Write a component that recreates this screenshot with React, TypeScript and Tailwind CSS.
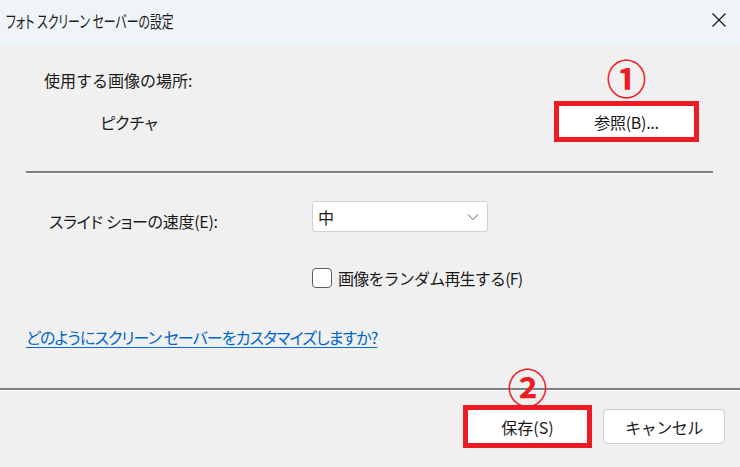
import React from "react";

export default function App() {
  const font = { fontFamily: '"Noto Sans CJK JP", "Noto Sans", sans-serif' };
  return (
    <div
      className="w-[740px] h-[467px] bg-[#f0f0f0] text-[#1a1a1a] flex flex-col overflow-hidden"
      style={font}
    >
      {/* Title bar */}
      <div className="h-[44px] bg-[#eff4f9] flex items-center justify-between pl-[6px] pr-[13px] shrink-0">
        <span className="text-[17px] leading-none mb-[4px] [font-feature-settings:'palt'] scale-x-[0.7] origin-left whitespace-pre">フォト スクリーン セーバーの設定</span>
        <svg width="16" height="16" viewBox="0 0 16 16" className="mb-[4px]">
          <path d="M1.5 1.5 L14.5 14.5 M14.5 1.5 L1.5 14.5" stroke="#1a1a1a" strokeWidth="1.3" />
        </svg>
      </div>

      {/* Section 1 */}
      <div className="pl-[44px] pt-[25px] text-[16px] leading-[22px]">使用する画像の場所:</div>
      <div className="flex items-center mt-[10px] pl-[100px] pr-[41px] justify-between">
        <span className="text-[16px] leading-[22px] tracking-[-1.5px]">ピクチャ</span>
        <div className="relative">
          <span className="absolute left-1/2 -translate-x-1/2 -top-[44px] text-[#ed1c24] text-[40px] leading-none font-bold">
            ①
          </span>
          <button className="w-[145px] h-[41px] bg-white border-[5px] border-[#ed1c24] flex items-center justify-center text-[16px] leading-none tracking-[-0.3px]">
            参照(B)...
          </button>
        </div>
      </div>

      {/* Separator */}
      <div className="mx-[26px] w-[687px] mt-[29px] h-[3px] border-t-2 border-[#808080] border-b border-b-white" />

      {/* Speed row */}
      <div className="flex items-start mt-[27px]">
        <span className="pl-[49px] w-[312px] text-[16px] leading-[22px] pt-[9px] [font-feature-settings:'palt'] tracking-[-0.3px]">スライド ショーの速度(E):</span>
        <div className="w-[176px] h-[31px] bg-white border border-[#d0d0d0] rounded-[3px] flex items-center justify-between pl-[5px] pr-[8px]">
          <span className="text-[16px] leading-none">中</span>
          <svg width="12" height="8" viewBox="0 0 12 8">
            <path d="M1 1.5 L6 6.5 L11 1.5" fill="none" stroke="#5a5a5a" strokeWidth="1" />
          </svg>
        </div>
      </div>

      {/* Checkbox row */}
      <div className="flex items-center mt-[35px] pl-[312px] gap-[6px]">
        <div className="w-[20px] h-[20px] bg-white border border-[#5f5f5f] rounded-[4px]" />
        <span className="text-[16px] leading-[22px] tracking-[-0.8px]">画像をランダム再生する(F)</span>
      </div>

      {/* Link */}
      <div className="pl-[26px] mt-[36px]">
        <a className="text-[16px] leading-[22px] text-[#0066cc] underline underline-offset-[3px] [font-feature-settings:'palt'] tracking-[-0.9px] cursor-pointer">
          どのようにスクリーン セーバーをカスタマイズしますか?
        </a>
      </div>

      {/* Separator full */}
      <div className="w-full mt-[39px] h-[3px] border-t-2 border-[#808080] border-b border-b-white" />

      {/* Buttons */}
      <div className="flex items-center justify-end pr-[15px] mt-[14px] gap-[11px]">
        <div className="relative">
          <span className="absolute left-1/2 -translate-x-1/2 -top-[39px] text-[#ed1c24] text-[40px] leading-none font-bold">
            ②
          </span>
          <button className="w-[129px] h-[43px] bg-white border-[5px] border-[#ed1c24] flex items-center justify-center text-[16px] leading-none">
            保存(S)
          </button>
        </div>
        <button className="w-[122px] h-[35px] bg-white border border-[#cfcfcf] rounded-[4px] flex items-center justify-center text-[16px] leading-none tracking-[-0.5px]">
          キャンセル
        </button>
      </div>
    </div>
  );
}
